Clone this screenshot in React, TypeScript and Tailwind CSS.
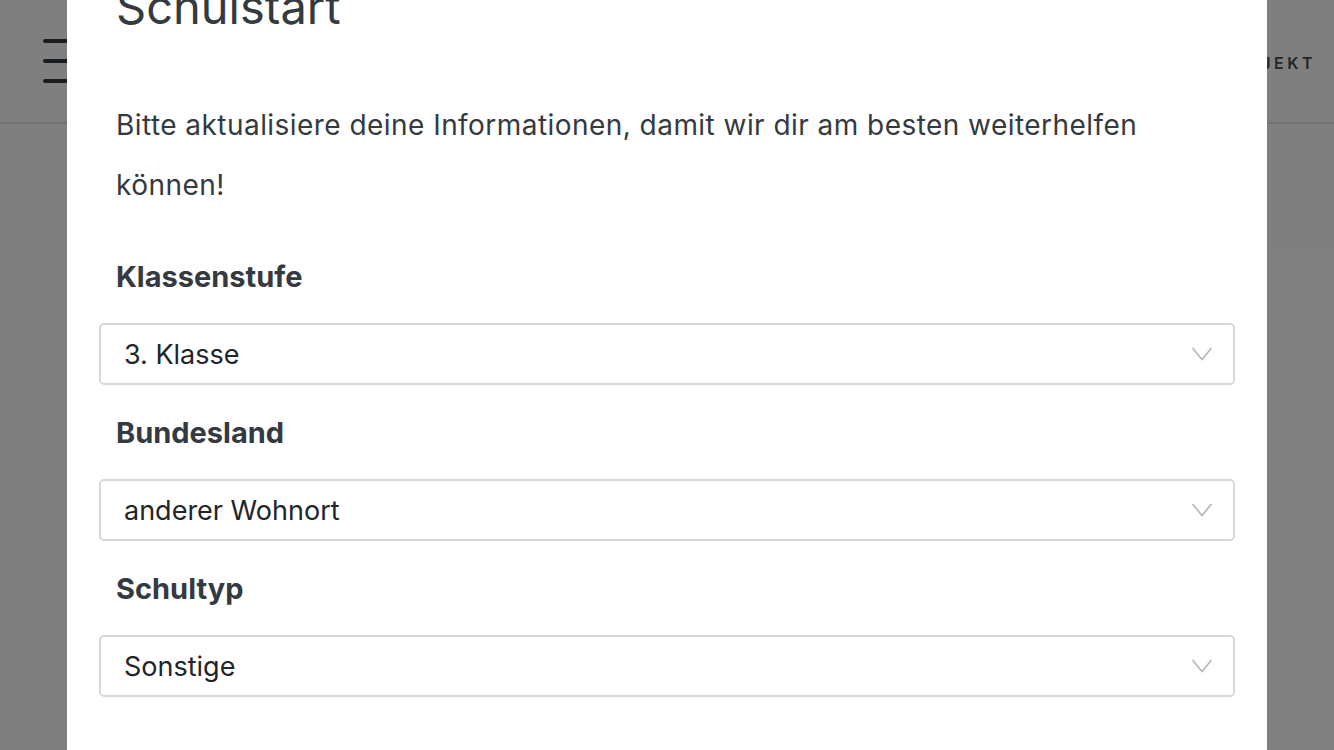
const fields = [
  { label: 'Klassenstufe', value: '3. Klasse' },
  { label: 'Bundesland', value: 'anderer Wohnort' },
  { label: 'Schultyp', value: 'Sonstige' },
];

function Select({ value }: { value: string }) {
  return (
    <div className="flex h-[62px] items-center justify-between rounded-[5px] border-2 border-[#d7d7d7] bg-white pl-[23px] pr-[20px]">
      <span className="mt-[3px] text-[27px] text-[#212529]">{value}</span>
      <svg width="22" height="16" viewBox="0 0 22 16" fill="none" className="text-[#b4b4b4]">
        <path d="M1.5 2 L11 13.5 L20.5 2" stroke="currentColor" strokeWidth="1.6" />
      </svg>
    </div>
  );
}

export default function App() {
  return (
    <div className="relative h-[750px] w-[1334px] overflow-hidden bg-white" style={{ fontFamily: 'Inter, "Noto Sans", sans-serif' }}>
      {/* underlying page header */}
      <header className="flex h-[124px] items-center justify-between border-b-2 border-[#dee2e6] pl-[43px] pr-[18px]">
        <div className="flex flex-col gap-[16px]">
          <span className="block h-[4px] w-[32px] rounded-full bg-[#343a40]" />
          <span className="block h-[4px] w-[32px] rounded-full bg-[#343a40]" />
          <span className="block h-[4px] w-[32px] rounded-full bg-[#343a40]" />
        </div>
        <nav className="mt-[4px] text-[16px] font-semibold tracking-[3.5px] text-[#4a4a4a]">PROJEKT</nav>
      </header>

      {/* backdrop */}
      <div className="absolute inset-0 bg-black/50" />

      {/* modal */}
      <div className="absolute bottom-0 left-[67px] top-0 w-[1200px] bg-white px-[32px]">
        <div className="pl-[17px] pr-[17px] text-[#343a40]">
          <h2 className="mt-[-21px] text-[47px] leading-[56px]">Schulstart</h2>
          <p className="mt-[60px] text-[28px] leading-[60px] tracking-[0.45px]">
            Bitte aktualisiere deine Informationen, damit wir dir am besten weiterhelfen können!
          </p>
        </div>
        <div className="mt-[44px]">
          {fields.map(f => (
            <div key={f.label}>
              <div className="mt-[30px] pl-[17px] text-[29px] font-bold leading-[36px] text-[#343a40]">{f.label}</div>
              <div className="mt-[28px]">
                <Select value={f.value} />
              </div>
            </div>
          ))}
        </div>
      </div>
    </div>
  );
}
